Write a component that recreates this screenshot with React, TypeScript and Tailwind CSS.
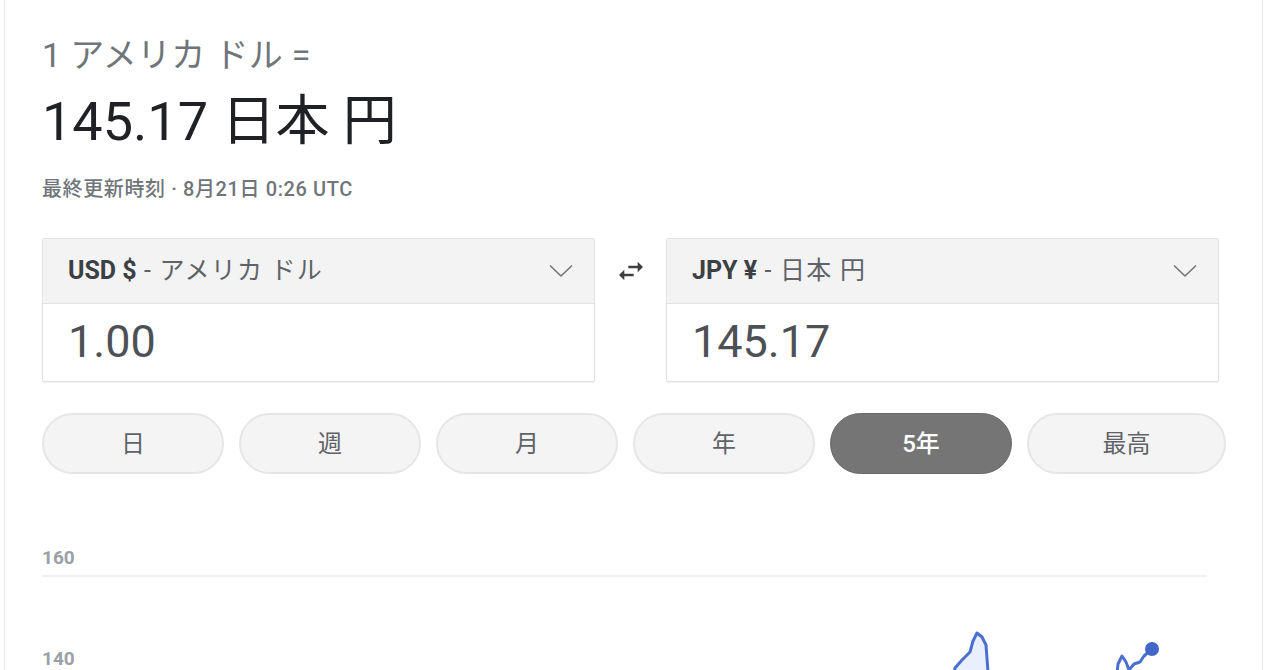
import { useState } from 'react';

const ranges = ['日', '週', '月', '年', '5年', '最高'];

function Chevron() {
  return (
    <svg width="24" height="14" viewBox="0 0 24 14" fill="none" stroke="#70757a" strokeWidth="1.6">
      <path d="M1 1.5l11 10.5 11-10.5" />
    </svg>
  );
}

function CurrencyBox({ code, name, value }: { code: string; name: string; value: string }) {
  return (
    <div className="w-[553px] border border-[#e2e2e2] rounded-[2px] shadow-[0_1px_1px_rgba(0,0,0,0.06)]">
      <div className="h-[65px] bg-[#f3f3f3] border-b border-[#e2e2e2] flex items-center justify-between pl-[25px] pr-[21px]">
        <div className="text-[25px] text-[#5f6368] tracking-[1.2px]">
          <span className="font-bold text-[#3c4043] tracking-[0px]">{code}</span> - {name}
        </div>
        <Chevron />
      </div>
      <div className="h-[77px] flex items-center pl-[25px] text-[45px] text-[#4d5156] pb-[2px]">{value}</div>
    </div>
  );
}

export default function App() {
  const [active, setActive] = useState('5年');

  return (
    <div
      className="w-[1280px] h-[670px] overflow-hidden bg-white"
      style={{ fontFamily: 'Roboto, "Noto Sans CJK JP", "Liberation Sans", sans-serif' }}
    >
      <div className="ml-[4px] w-[1259px] h-[700px] border-x border-[#ececec] pl-[37px] pt-[34px]">
        {/* ヘッダー */}
        <div className="text-[34px] leading-[42px] text-[#70757a] tracking-[0.3px]">1 アメリカ ドル =</div>
        <div className="mt-[14px] text-[54px] leading-[64px] text-[#202124]">145.17 日本 円</div>
        <div className="mt-[22px] text-[20px] leading-[26px] text-[#70757a] font-medium tracking-[0.6px]">
          最終更新時刻 · 8月21日 0:26 UTC
        </div>

        {/* 通貨入力 */}
        <div className="mt-[36px] flex items-start">
          <CurrencyBox code="USD $" name="アメリカ ドル" value="1.00" />
          <div className="w-[71px] h-[65px] flex items-center justify-center">
            <svg width="32" height="32" viewBox="0 0 24 24" fill="#3c4043">
              <path d="M6.99 11L3 15l3.99 4v-3H14v-2H6.99v-3zM21 9l-3.99-4v3H10v2h7.01v3L21 9z" />
            </svg>
          </div>
          <CurrencyBox code="JPY ¥" name="日本 円" value="145.17" />
        </div>

        {/* 期間 */}
        <div className="mt-[31px] w-[1184px] flex gap-[15px]">
          {ranges.map((r, i) => (
            <button
              key={r}
              onClick={() => setActive(r)}
              className={`h-[61px] rounded-full text-[24px] flex items-center justify-center ${
                i === ranges.length - 1 ? 'flex-1' : 'w-[182px]'
              } ${
                active === r
                  ? 'bg-[#757575] text-white font-medium border border-[#6a6a6a]'
                  : 'bg-[#f4f4f4] text-[#5f6368] border-2 border-[#e6e6e6]'
              }`}
            >
              {r}
            </button>
          ))}
        </div>

        {/* チャート */}
        <div className="relative mt-[73px] w-[1165px]">
          <div className="text-[19px] leading-[22px] font-bold text-[#9aa0a6]">160</div>
          <div className="mt-[6px] h-[2px] bg-[#f0f0f0]" />
          <div className="mt-[71px] text-[19px] leading-[22px] font-bold text-[#9aa0a6]">140</div>
          <svg className="absolute left-0 top-0" width="1165" height="140" viewBox="0 0 1165 140">
            <g transform="translate(-42,-547)">
              <path
                d="M950 700 L955 668 L962 660 L970 652 L973 641 L977 633 L982 637 L986 645 L988 672 L990 700 Z"
                fill="#e8f0fe"
                stroke="#4a6fd0"
                strokeWidth="3"
                strokeLinejoin="round"
              />
              <path
                d="M1114 700 L1118 664 L1122 656 L1126 662 L1129 670 L1134 664 L1140 662 L1144 656 L1152 649"
                fill="none"
                stroke="#4a6fd0"
                strokeWidth="3"
                strokeLinejoin="round"
              />
              <circle cx="1152" cy="649" r="7" fill="#4267c8" />
            </g>
          </svg>
        </div>
      </div>
    </div>
  );
}
